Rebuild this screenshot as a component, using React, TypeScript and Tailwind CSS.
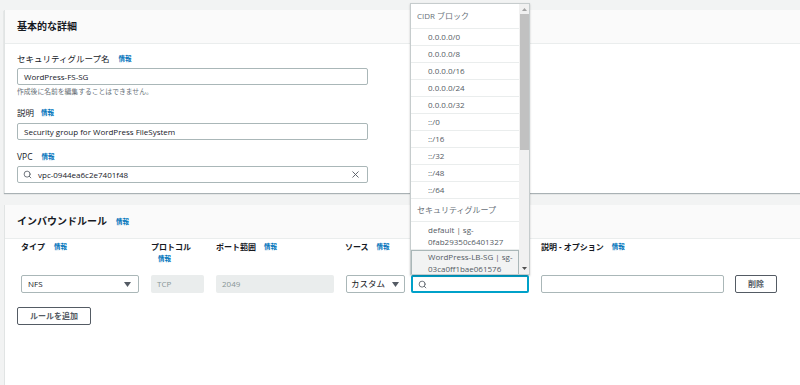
import React from 'react';
import { Search, X } from 'lucide-react';

const Info = ({ className = '' }: { className?: string }) => (
  <span className={`text-[6.5px] font-bold text-[#0073bb] ${className}`}>情報</span>
);

const Caret = () => (
  <svg width="7" height="5" viewBox="0 0 7 5" className="shrink-0">
    <polygon points="0,0 7,0 3.5,5" fill="#545b64" />
  </svg>
);

const cidrs = ['0.0.0.0/0', '0.0.0.0/8', '0.0.0.0/16', '0.0.0.0/24', '0.0.0.0/32', '::/0', '::/16', '::/32', '::/48', '::/64'];

function SourceMenu() {
  return (
    <div className="absolute left-[410px] top-[3px] w-[120px] h-[272px] bg-white border border-[#c6cccd] shadow-[0_1px_2px_rgba(0,0,0,0.2)] flex overflow-hidden">
      <div className="flex-1 flex flex-col overflow-hidden">
        <div className="h-[25px] shrink-0 flex items-center pl-[6px] text-[8px] text-[#687078] border-b border-[#eaeded]">
          CIDR ブロック
        </div>
        {cidrs.map((c) => (
          <div key={c} className="h-[17px] shrink-0 flex items-center pl-[17px] text-[8px] text-[#545b64] border-b border-[#eaeded]">
            {c}
          </div>
        ))}
        <div className="h-[23px] shrink-0 flex items-center pl-[6px] text-[8px] text-[#687078] border-b border-[#eaeded]">
          セキュリティグループ
        </div>
        <div className="h-[28px] shrink-0 flex flex-col justify-center pl-[17px] text-[8px] leading-[12px] text-[#545b64] border-b border-[#eaeded]">
          <span>default | sg-</span>
          <span>0fab29350c6401327</span>
        </div>
        <div className="h-[26px] shrink-0 flex flex-col justify-center pl-[16px] text-[8px] leading-[12px] text-[#545b64] bg-[#f2f3f3] border border-[#aab7b8]">
          <span>WordPress-LB-SG | sg-</span>
          <span>03ca0ff1bae061576</span>
        </div>
      </div>
      <div className="w-[10px] shrink-0 bg-[#f1f1f1] flex flex-col items-center">
        <svg width="5" height="3" viewBox="0 0 5 3" className="mt-[4px]">
          <polygon points="0,3 5,3 2.5,0" fill="#a3a3a3" />
        </svg>
        <div className="w-[9px] h-[136px] mt-[3px] bg-[#c1c1c1]" />
        <div className="flex-1" />
        <svg width="5" height="3" viewBox="0 0 5 3" className="mb-[4px]">
          <polygon points="0,0 5,0 2.5,3" fill="#505050" />
        </svg>
      </div>
    </div>
  );
}

export default function App() {
  return (
    <div className="relative h-[385px] w-[800px] overflow-hidden bg-[#f2f3f3] pt-[10px] font-['Open_Sans','Noto_Sans_CJK_JP',sans-serif] text-[#16191f]">
      {/* 基本的な詳細 */}
      <div className="ml-[4px] w-[830px] bg-white border-l border-[#e1e4e4] shadow-[0_1px_1px_rgba(0,28,36,0.3)]">
        <div className="h-[34px] bg-[#fafafa] border-b border-[#eaeded] flex items-center pl-[12px]">
          <h2 className="text-[10px] font-bold">基本的な詳細</h2>
        </div>
        <div className="pl-[12px] pt-[9px] pb-[10px]">
          <div className="h-[12px] flex items-center text-[8.5px]">
            セキュリティグループ名 <Info className="ml-[9px]" />
          </div>
          <div className="mt-[3px] h-[17px] w-[351px] border border-[#aab7b8] rounded-[2px] flex items-center pl-[6px] text-[8px]">
            WordPress-FS-SG
          </div>
          <div className="mt-[2px] h-[10px] flex items-center text-[6.8px] text-[#687078]">
            作成後に名前を編集することはできません。
          </div>
          <div className="mt-[10px] h-[12px] flex items-center text-[8.5px]">
            説明 <Info className="ml-[7px]" />
          </div>
          <div className="mt-[4px] h-[17px] w-[351px] border border-[#aab7b8] rounded-[2px] flex items-center pl-[6px] text-[8px]">
            Security group for WordPress FileSystem
          </div>
          <div className="mt-[11px] h-[12px] flex items-center text-[8.5px]">
            VPC <Info className="ml-[9px]" />
          </div>
          <div className="mt-[3px] h-[17px] w-[351px] border border-[#aab7b8] rounded-[2px] flex items-center pl-[5px] pr-[6px] text-[8px]">
            <Search size={9} strokeWidth={2.2} className="text-[#545b64]" />
            <span className="ml-[6px] flex-1">vpc-0944ea6c2e7401f48</span>
            <X size={11} strokeWidth={2} className="text-[#545b64]" />
          </div>
        </div>
      </div>

      {/* インバウンドルール */}
      <div className="ml-[4px] mt-[12px] w-[830px] h-[200px] bg-white border-l border-[#e1e4e4]">
        <div className="h-[34px] bg-[#fafafa] border-b border-[#eaeded] flex items-center pl-[12px]">
          <h2 className="text-[10px] font-bold">インバウンドルール</h2>
          <Info className="ml-[9px]" />
        </div>
        <div className="pl-[16px] pt-[2px]">
          <div className="flex h-[34px] text-[8px] font-bold">
            <div className="w-[118px] mr-[12px] h-[12px] flex items-center">
              タイプ <Info className="ml-[9px]" />
            </div>
            <div className="w-[53px] mr-[12px] flex flex-col">
              <span className="h-[12px] flex items-center">プロトコル</span>
              <Info className="ml-[7px] mt-[1px]" />
            </div>
            <div className="w-[118px] mr-[11px] h-[12px] flex items-center">
              ポート範囲 <Info className="ml-[8px]" />
            </div>
            <div className="w-[184px] mr-[12px] h-[12px] flex items-center">
              ソース <Info className="ml-[8px]" />
            </div>
            <div className="h-[12px] flex items-center">
              説明 - オプション <Info className="ml-[8px]" />
            </div>
          </div>
          <div className="flex h-[18px] text-[8px]">
            <div className="w-[118px] mr-[12px] border border-[#aab7b8] rounded-[2px] flex items-center justify-between pl-[6px] pr-[7px]">
              <span>NFS</span>
              <Caret />
            </div>
            <div className="w-[53px] mr-[12px] bg-[#eaeded] rounded-[2px] flex items-center pl-[6px] text-[#879596]">TCP</div>
            <div className="w-[118px] mr-[12px] bg-[#eaeded] rounded-[2px] flex items-center pl-[6px] text-[#879596]">2049</div>
            <div className="w-[59px] mr-[6px] border border-[#aab7b8] rounded-[2px] flex items-center justify-between pl-[4px] pr-[5px] text-[8.5px]">
              <span>カスタム</span>
              <Caret />
            </div>
            <div className="w-[118px] mr-[12px] border-2 border-[#00a1c9] rounded-[2px] flex items-center pl-[5px]">
              <Search size={9} strokeWidth={2.2} className="text-[#545b64]" />
            </div>
            <div className="w-[183px] mr-[11px] border border-[#aab7b8] rounded-[2px]" />
            <button type="button" className="w-[42px] border border-[#545b64] rounded-[2px] text-[8px] font-bold text-[#545b64]">
              削除
            </button>
          </div>
        </div>
        <div className="pl-[12px] mt-[8px]">
          <button type="button" className="h-[18px] w-[74px] border border-[#545b64] rounded-[2px] text-[8px] font-bold text-[#545b64]">
            ルールを追加
          </button>
        </div>
      </div>

      <SourceMenu />
    </div>
  );
}
